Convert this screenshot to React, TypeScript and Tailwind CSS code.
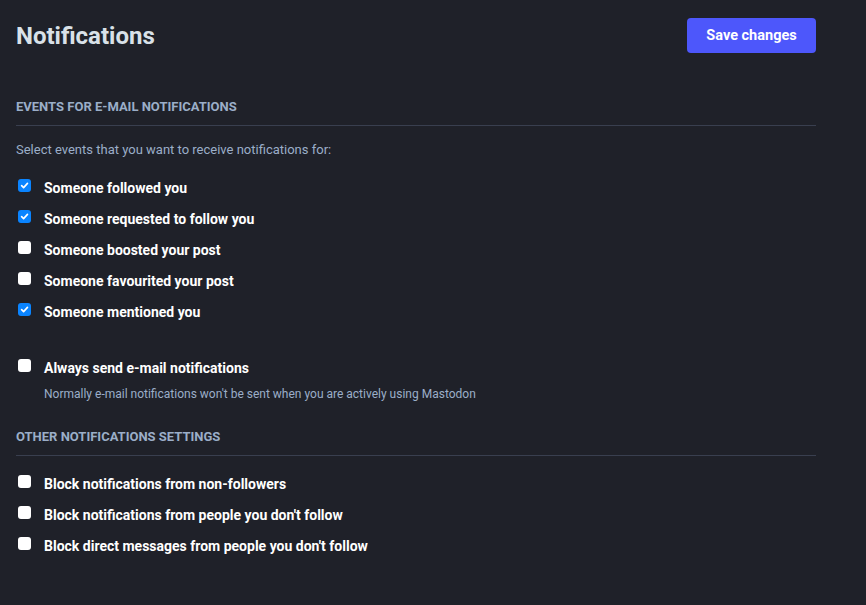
import React from "react";

function Box({ checked }: { checked: boolean }) {
  return checked ? (
    <span className="w-[13px] h-[13px] rounded-[3px] bg-[#0a84ff] flex items-center justify-center shrink-0">
      <svg width="9" height="9" viewBox="0 0 10 10" fill="none">
        <path d="M1.8 5.2 L4 7.4 L8.3 2.6" stroke="white" strokeWidth="1.8" strokeLinecap="round" strokeLinejoin="round" />
      </svg>
    </span>
  ) : (
    <span className="w-[13px] h-[13px] rounded-[3px] bg-white shrink-0" />
  );
}

function Row({ label, checked }: { label: string; checked: boolean }) {
  return (
    <div className="flex items-center h-[31px]">
      <div className="w-[28px] pl-[2px] flex items-center -mt-[6px]">
        <Box checked={checked} />
      </div>
      <span className="text-[14px] font-bold text-[#ffffff]">{label}</span>
    </div>
  );
}

export default function App() {
  return (
    <div className="min-h-[605px] bg-[#1f2129] text-white" style={{ fontFamily: "Roboto, 'Liberation Sans', sans-serif" }}>
      <div className="w-[800px] ml-[16px] pt-[18px]">
        <div className="flex items-center justify-between h-[35px]">
          <h1 className="text-[24px] font-bold text-[#d9e1e8]">Notifications</h1>
          <button className="h-[35px] w-[129px] rounded-[4px] bg-[#4d57fb] text-[14.5px] font-bold text-white">Save changes</button>
        </div>
        <div className="mt-[45px] text-[13px] font-bold uppercase text-[#9baec8] leading-[18px]">Events for e-mail notifications</div>
        <div className="mt-[9px] border-b border-[#393f4f]" />
        <div className="mt-[16px] text-[13px] text-[#9baec8] leading-[16px]">Select events that you want to receive notifications for:</div>
        <div className="mt-[15px]">
          <Row label="Someone followed you" checked />
          <Row label="Someone requested to follow you" checked />
          <Row label="Someone boosted your post" checked={false} />
          <Row label="Someone favourited your post" checked={false} />
          <Row label="Someone mentioned you" checked />
        </div>
        <div className="mt-[25px]">
          <Row label="Always send e-mail notifications" checked={false} />
          <div className="ml-[28px] mt-[2px] text-[12px] text-[#9baec8] leading-[16px]">Normally e-mail notifications won't be sent when you are actively using Mastodon</div>
        </div>
        <div className="mt-[26px] text-[13px] font-bold uppercase text-[#9baec8] leading-[18px]">Other notifications settings</div>
        <div className="mt-[9px] border-b border-[#393f4f]" />
        <div className="mt-[13px]">
          <Row label="Block notifications from non-followers" checked={false} />
          <Row label="Block notifications from people you don't follow" checked={false} />
          <Row label="Block direct messages from people you don't follow" checked={false} />
        </div>
      </div>
    </div>
  );
}
